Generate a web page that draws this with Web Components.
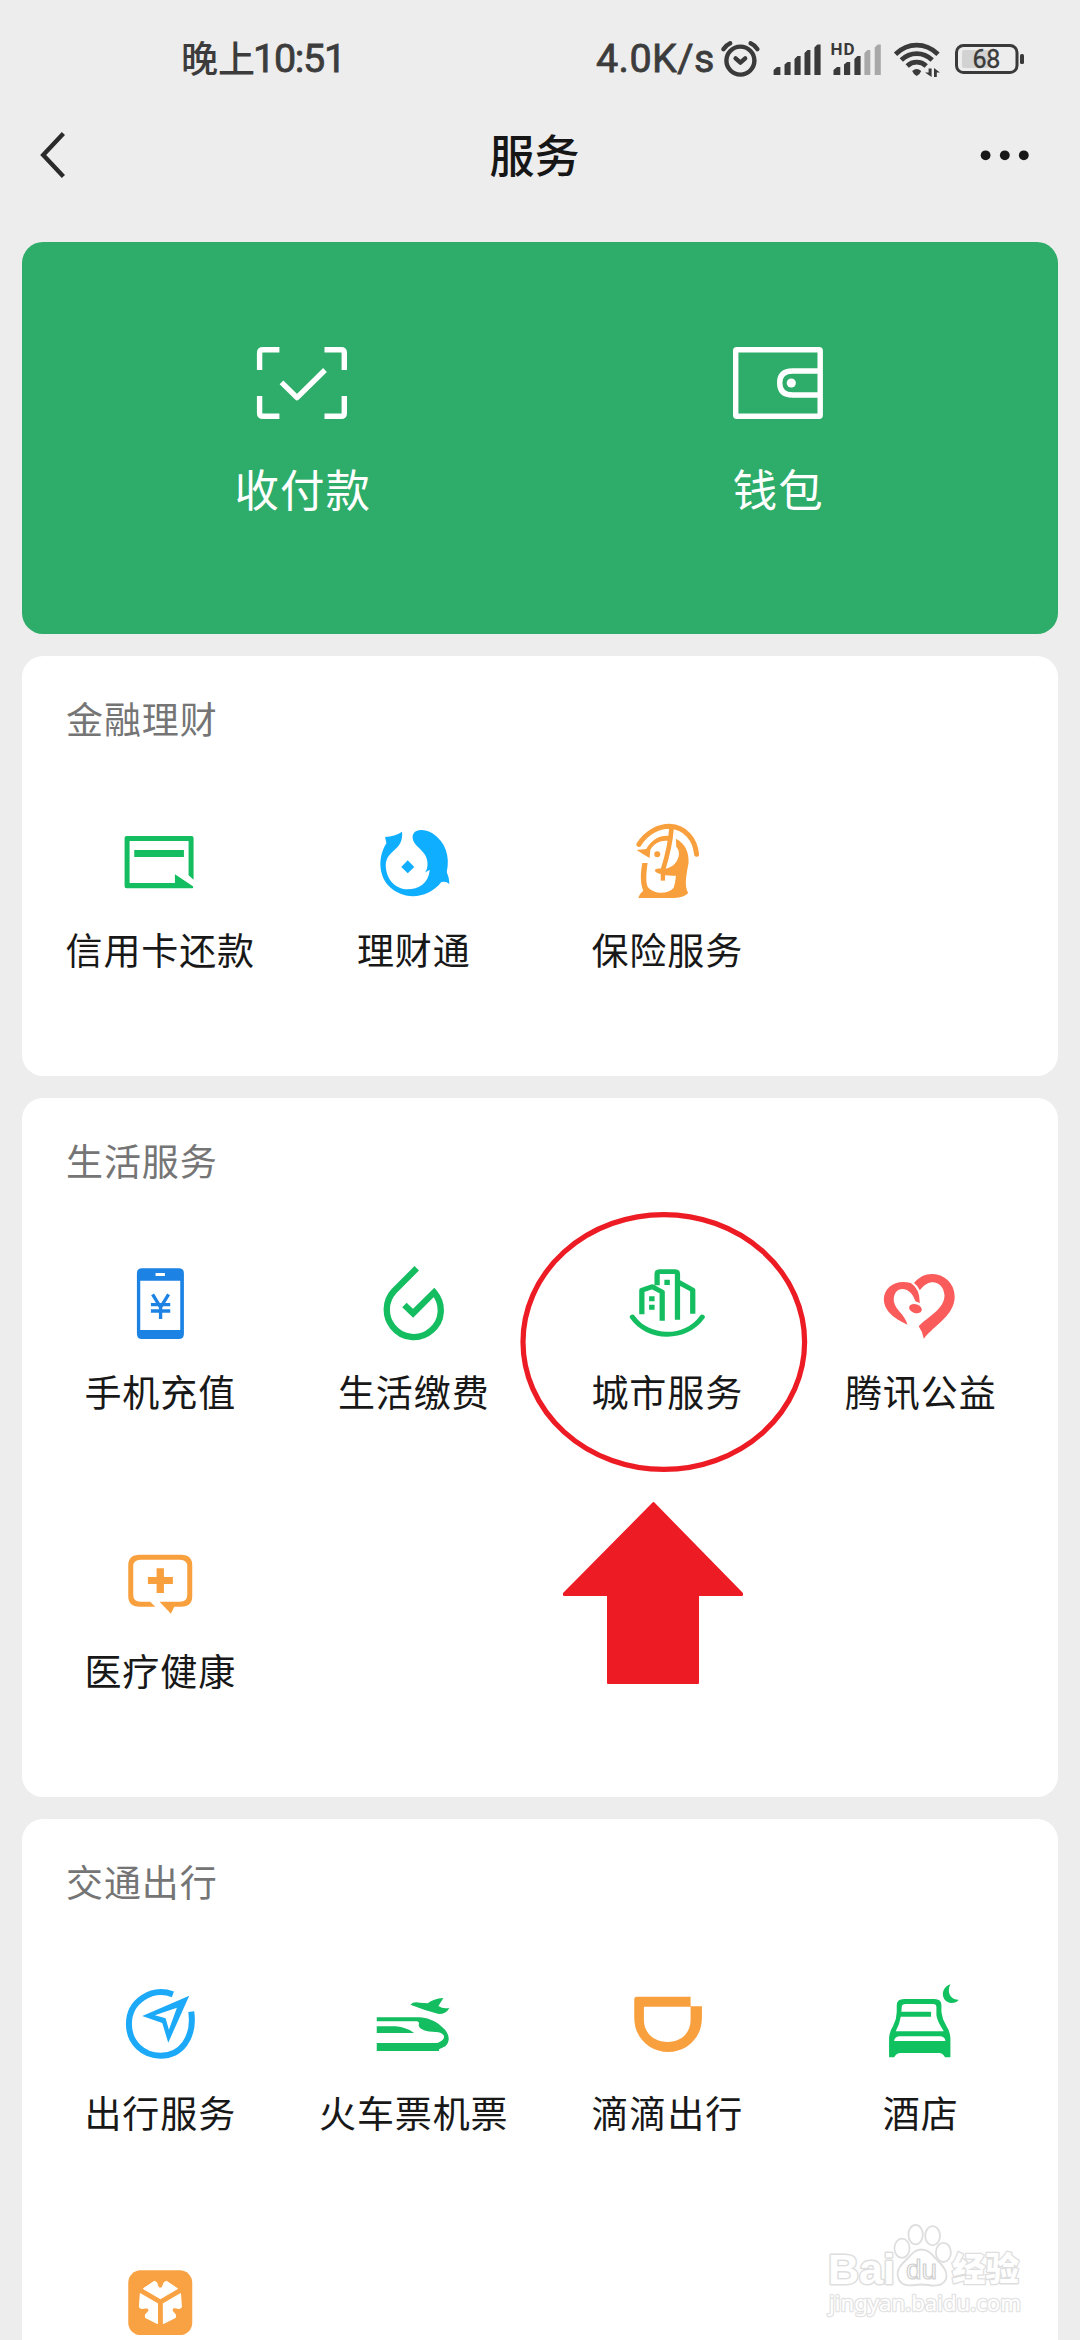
<!DOCTYPE html>
<html lang="zh-CN">
<head>
<meta charset="utf-8">
<title>服务</title>
<style>
html,body{margin:0;padding:0;background:#ededed}
body{width:1080px;height:2340px;overflow:hidden;font-family:"Noto Sans CJK SC",sans-serif}
</style>
</head>
<body>
<service-page></service-page>
<script>
const define = (name, html) => {
  const t = document.createElement('template');
  t.innerHTML = html;
  customElements.define(name, class extends HTMLElement {
    constructor() {
      super();
      this.attachShadow({mode: 'open'}).appendChild(t.content.cloneNode(true));
    }
  });
};

define('status-bar', `
<style>
:host{display:flex;align-items:center;justify-content:space-between;box-sizing:border-box;height:118px;padding:0 56px 0 181px;color:#3c3c3c;font:500 37px/1 "Noto Sans CJK SC",sans-serif}
.time,.right{display:flex;align-items:center}
.cjk{line-height:40px;padding-bottom:4px}
.latin{font:400 39.5px/44px Roboto,sans-serif;-webkit-text-stroke:.8px #3c3c3c}
.time .latin{letter-spacing:-1.3px;margin-left:-2px}
.right .latin{letter-spacing:.4px;width:124px}
svg{display:block}
</style>
<div class="time"><span class="cjk">晚上</span><span class="latin">10:51</span></div>
<div class="right"><span class="latin">4.0K/s</span>
<svg width="304" height="46" viewBox="720 36 304 46" fill="#3a3a3a">
 <g fill="none" stroke="#3a3a3a" stroke-width="4.4" stroke-linecap="round" stroke-linejoin="round">
  <circle cx="740.4" cy="60.6" r="14"/><path d="M723.4 49.2Q726 45.2 730.2 43.3M757.4 49.2Q755 45.2 750.6 43.3"/><path d="M735.6 58.4L740.4 62.6L745.2 58.4"/>
 </g>
 <path d="M773.6 75V70L777 67H780.4V75zM784.5 75V64.5L787.5 62H790.6V75zM794.5 75V59L797.5 56H800.6V75zM804.5 75V53L807.5 50H810.4V75zM814.4 75V47.5L817.4 44.5H820.6V75z"/>
 <text x="830.6" y="55" font-family="Roboto" font-weight="700" font-size="17" textLength="24">HD</text>
 <path d="M833.5 75V70L837 67H840.3V75zM844 75V64.5L847 62H850.2V75zM854.4 75V59L857.4 56H860.6V75z"/>
 <path fill="#a8a8a8" d="M864.4 75V53L867.4 50H870.3V75zM874.7 75V47.5L877.7 44.5H880.8V75z"/>
 <g fill="none" stroke="#3a3a3a" stroke-width="4.8"><path d="M895.5 54.2Q905 45.2 916.7 45.2T938 54.2"/><path d="M901.3 60Q908 53.6 916.7 53.6T932.2 60"/><path d="M907.2 66Q911.3 62.2 916.7 62.2T926.2 66"/></g>
 <path d="M912.2 71Q916.7 67 921.2 71Q920 74.5 916.7 76Q913.4 74.5 912.2 71z"/>
 <path d="M928.6 68.5H931.6V77L925 72.5H928.6zM934 77V68L940 72.5H936.8V77z"/>
 <rect x="962" y="50" width="27" height="18" rx="2" fill="#d2d2d2"/>
 <rect x="956.5" y="45.5" width="60.5" height="27" rx="7" fill="none" stroke="#3a3a3a" stroke-width="3"/>
 <rect x="1020" y="54" width="4" height="10" rx="1.5"/>
 <text x="972.4" y="68" font-family="Roboto" font-weight="400" font-size="25" textLength="28" stroke="#3a3a3a" stroke-width=".4">68</text>
</svg></div>`);

define('nav-bar', `
<style>
:host{display:flex;align-items:center;justify-content:space-between;box-sizing:border-box;height:76px;padding:0 50px 0 36px;color:#161616}
.title{font:500 45px/66px "Noto Sans CJK SC",sans-serif;padding:0 0 5px 3px}
svg{display:block}
.side{width:60px}
</style>
<svg class="side" width="60" height="60" viewBox="36 126 60 60"><path d="M63.4 133.500L43.2 155L63.4 176.500" fill="none" stroke="#2a2a2a" stroke-width="4.4"/></svg>
<span class="title"><slot></slot></span>
<svg class="side" width="60" height="60" viewBox="970 126 60 60" fill="#181818"><circle cx="985.6" cy="155.3" r="4.9"/><circle cx="1004.8" cy="155.3" r="4.9"/><circle cx="1023.8" cy="155.3" r="4.9"/></svg>`);

define('pay-card', `
<style>
:host{display:flex;box-sizing:border-box;height:392px;padding:0 42.5px;border-radius:21px;background:#2eac69}
</style><slot></slot>`);

define('pay-item', `
<style>
:host{display:flex;flex:1;flex-direction:column;align-items:center;padding-top:96px;color:#fff;font:400 44.5px/66px "Noto Sans CJK SC",sans-serif;letter-spacing:1px}
.label{margin-top:25px;padding-left:1px}
::slotted(svg){display:block}
</style><slot name="icon"></slot><span class="label"><slot></slot></span>`);

define('service-section', `
<style>
:host{display:block;box-sizing:border-box;padding:34px 11px 49px;border-radius:21px;background:#fff;letter-spacing:.9px;font-size:37px}
.title{padding:0 0 2px 33px;line-height:56px;color:#757575;font-weight:400}
.grid{display:grid;grid-template-columns:repeat(4,1fr);grid-auto-rows:279px}
</style><div class="title"><slot name="title"></slot></div><div class="grid"><slot></slot></div>`);

define('service-item', `
<style>
:host{display:flex;flex-direction:column;align-items:center;padding-top:72px;color:#181818;line-height:50px;white-space:nowrap}
.label{margin-top:20px;padding-left:1px}
::slotted(svg){display:block;width:84px;height:84px;overflow:visible}
</style><slot name="icon"></slot><span class="label"><slot></slot></span>`);

define('callout-mark', `
<style>
:host{position:absolute;left:518px;top:1208px;width:292px;height:480px}
svg{display:block}
</style>
<svg width="292" height="480" viewBox="518 1208 292 480"><ellipse cx="663.8" cy="1342" rx="140.8" ry="127.4" fill="none" stroke="#ed1c24" stroke-width="5.2"/><path fill="#ed1c24" stroke="#ed1c24" stroke-width="2" stroke-linejoin="round" d="M653.500 1503L742 1593.500V1595H698V1683H608V1595H564V1593.500z"/></svg>`);

define('site-watermark', `
<style>
:host{position:absolute;left:820px;top:2215px;width:210px;height:110px}
svg{display:block}
</style>
<svg width="210" height="110" viewBox="820 2215 210 110" fill="#fff" stroke="#dedede" stroke-width="1.8" stroke-linejoin="round">
 <text x="828" y="2283.500" font-family="Liberation Sans" font-weight="700" font-size="43" textLength="67" lengthAdjust="spacingAndGlyphs" paint-order="stroke" stroke-width="3">Bai</text>
 <ellipse cx="902" cy="2248.3" rx="7.6" ry="9.6"/><ellipse cx="915.6" cy="2234.6" rx="7.2" ry="9.8"/><ellipse cx="932.6" cy="2235.7" rx="7.4" ry="9.6"/><ellipse cx="943.4" cy="2252.4" rx="7.5" ry="9.6"/>
 <path d="M921.5 2249.5C929 2249.5 933 2256 938 2261C944 2267 948 2272 946 2279C943 2287 934 2286 928 2285Q922 2284 915 2285C909 2286 900 2286 898 2277C896 2269 902 2264 907 2259C912 2254 915 2249.5 921.5 2249.5z"/>
 <text x="906" y="2279" font-family="Liberation Sans" font-size="27" textLength="31" lengthAdjust="spacingAndGlyphs" stroke-width="1.2" stroke="#d0d0d0">du</text>
 <text x="952" y="2281" font-family="Noto Sans CJK SC" font-weight="900" font-size="33.5" textLength="67" paint-order="stroke" stroke-width="2.6">经验</text>
 <text x="829" y="2310.5" font-family="Noto Sans,Open Sans" font-size="22.5" textLength="192" lengthAdjust="spacingAndGlyphs" paint-order="stroke" stroke="#e3e3e3" stroke-width="2.6">jingyan.baidu.com</text>
</svg>`);

define('service-page', `
<style>
:host{display:block;position:relative;width:1080px;height:2340px;overflow:hidden;background:#ededed}
main{display:flex;flex-direction:column;gap:22px;padding:48px 22px 0}
</style>
<status-bar></status-bar>
<nav-bar>服务</nav-bar>
<main>
<pay-card>
 <pay-item><svg slot="icon" width="100" height="92" viewBox="252 338 100 92" fill="none" stroke="#fff" stroke-width="5.4"><path d="M279.4 349.8H263Q259.6 349.8 259.6 353V370M324.5 349.8H341Q344.3 349.8 344.3 353V370M259.6 396V413Q259.6 416.3 263 416.3H279.4M344.3 396V413Q344.3 416.3 341 416.3H324.5"/><path stroke-linejoin="round" d="M281.5 382.4L297 397.6L325 370"/></svg>收付款</pay-item>
 <pay-item><svg slot="icon" width="100" height="92" viewBox="727 338 100 92" fill="none" stroke="#fff" stroke-width="5.4" stroke-linejoin="round"><rect x="734.7" y="349.8" width="84.5" height="66.5" rx="1"/><path d="M819 371H791.5Q778.7 371 778.7 383T791.5 395H819"/><circle cx="790.3" cy="383" r="4.6" fill="#fff" stroke="none"/></svg>钱包</pay-item>
</pay-card>

<service-section><span slot="title">金融理财</span>
 <service-item><svg slot="icon" viewBox="117.75 820 84 84"><g transform="translate(40 670) scale(.33333)" fill="#14bd60"><path d="M253 504Q253 498 259 498H454Q460 498 460 504V629L445 616V513H268V639H404V613L458 649Q461 655 454 655H259Q253 655 253 649z"/><path d="M282 540H431V561H282z"/></g></svg>信用卡还款</service-item>
 <service-item><svg slot="icon" viewBox="371.25 820 84 84"><g transform="translate(40 670) scale(.33333)" fill="#10aeff"><path d="M1087 485Q1065 500 1036 501L1040 520C1014 560 1017 615 1045 646C1085 690 1160 692 1205 636Q1219 633 1229 642Q1229 624 1221 606C1232 560 1217 515 1178 490C1160 479 1142 478 1132 482C1117 487 1114 505 1126 521C1140 539 1160 548 1163 575Q1165 595 1156 607L1170 600C1166 640 1137 658 1103 658C1062 657 1038 622 1038 585C1040 538 1092 543 1087 485z"/><path d="M1104 571L1123.500 591L1104 610L1084.500 591z"/></g></svg>理财通</service-item>
 <service-item><svg slot="icon" viewBox="624.75 820 84 84"><g transform="translate(560 790) scale(.33333)" fill="#f9a03e"><g fill="none" stroke="#f9a03e" stroke-width="15" stroke-linecap="round"><path d="M236 163C260 125 296 109 328 109C376 111 405 149 409 193"/><path stroke-width="14" stroke-linecap="butt" d="M334 112Q330 170 308 240"/><path stroke-width="13" stroke-linecap="butt" d="M308 240V272"/></g><path d="M229 180L258 177C275 148 300 135 327 138L325 153C304 150 283 157 270 180L268 204Q250 194 229 180z"/><circle cx="291" cy="193" r="9"/><path d="M347 146C376 161 386 187 385 218C380 248 370 285 384 309Q372 322 342 324H234Q238 310 249 302C239 278 241 247 246 219H262C258 249 256 274 262 290C282 315 324 312 340 294Q346 277 347 257Q318 259 298 251Q284 248 284 240Q287 235 304 235C323 238 337 229 346 218C358 202 360 183 348 170z"/></g></svg>保险服务</service-item>
</service-section>

<service-section><span slot="title">生活服务</span>
 <service-item><svg slot="icon" viewBox="117.75 1262 84 84"><g transform="translate(60 1240) scale(.33333)"><path fill="#1c83e4" fill-rule="evenodd" d="M245 85H356Q371 85 371 100V281Q371 297 356 297H245Q230 297 230 281V100Q230 85 245 85zM240 122V270H360V122zM286 99V108H314V99z"/><path d="M277 163L301 202L325 163M272 194H330M272 213H330M301 200V237" fill="none" stroke="#1c83e4" stroke-width="10"/></g></svg>手机充值</service-item>
 <service-item><svg slot="icon" viewBox="371.25 1262 84 84"><g transform="translate(60 1240) scale(.33333)"><path fill="none" stroke="#14bd60" stroke-width="19" d="M1071 85L1003 153C975 183 974 229 999 260C1027 296 1080 302 1114 272C1150 243 1152 192 1123 157L1060 220L1034 195"/></g></svg>生活缴费</service-item>
 <service-item><svg slot="icon" viewBox="624.75 1262 84 84"><g transform="translate(510 1200) scale(.36352 .33333)" fill="none" stroke="#14bd60" stroke-width="14.500" stroke-linejoin="round"><path d="M362 343V271L390 260L418 276V362M404 256V221Q404 215 412 215H452Q460 215 460 221V359M460 245L502 270V341"/><path stroke-linecap="round" d="M336 351C378 418 482 422 528 351"/><path fill="#14bd60" stroke="none" d="M424 239H439V255H424zM382 289H397V304H382zM382 314H397V329H382z"/></g></svg>城市服务</service-item>
 <service-item><svg slot="icon" viewBox="878.25 1262 84 84"><g transform="translate(510 1200) scale(.36352 .33333)" fill="#fa5c5c"><path d="M1112 249C1125 231 1145 221 1164 222C1200 224 1225 255 1224 292C1222 347 1170 374 1139 416Q1136 396 1125 379C1149 351 1196 328 1196 286C1193 243 1154 231 1128 271Q1123 257 1112 249z"/><path d="M1103 249Q1128 265 1128 309L1116 304C1106 270 1084 261 1069 270C1058 278 1055 291 1057 306C1061 330 1087 343 1094 374C1067 360 1029 338 1029 297C1030 260 1064 237 1103 249z"/><ellipse cx="1116" cy="326" rx="18" ry="13" transform="rotate(20 1116 326)"/></g></svg>腾讯公益</service-item>
 <service-item><svg slot="icon" viewBox="117.75 1541 84 84"><g transform="translate(60 1520) scale(.33333)" fill="#f9a03e"><path d="M238 104H363Q396 104 396 136V228Q396 260 363 260H342L332 281L298 245H359Q381 245 381 225V139Q381 119 359 119H241Q219 119 219 139V225Q219 245 241 245H270L285 260H238Q204 260 204 228V136Q204 104 238 104z"/><path d="M289 145H311V171H338V192H311V219H289V192H263V171H289z"/></g></svg>医疗健康</service-item>
</service-section>

<service-section><span slot="title">交通出行</span>
 <service-item><svg slot="icon" viewBox="117.75 1983 84 84"><g transform="translate(60 1970) scale(.33333)"><path fill="none" stroke="#1ca9f7" stroke-width="18" d="M338 73C274 50 206 94 206 162C206 218 249 257 301 257C361 257 404 205 393 125"/><path fill="#1ca9f7" fill-rule="evenodd" d="M387 77L324 218L306 159L246 138zM350 113L284 136L316 145L326 179z"/></g></svg>出行服务</service-item>
 <service-item><svg slot="icon" viewBox="371.25 1983 84 84"><g transform="translate(60 1970) scale(.33333)" fill="#14bd60"><path d="M951 142H1080C1113 145 1135 158 1151 175C1170 192 1172 215 1157 229L1138 238V243H951V219H1133C1152 213 1156 201 1151 195Q1144 185 1118 185C1089 184 1075 172 1077 164Q1080 156 1072 154H951z"/><path d="M951 169H1008Q1040 172 1063 189H951zM1052 104Q1060 94 1080 98L1104 100Q1120 86 1151 84L1136 108Q1152 119 1169 113Q1160 132 1137 132Q1095 121 1052 104z"/></g></svg>火车票机票</service-item>
 <service-item><svg slot="icon" viewBox="624.75 1983 84 84"><g transform="translate(580 1970) scale(.33333)" fill="#f9a03e"><path d="M170 80H331V109H365V143C365 205 318 246 264 246S162 205 162 143V88Q162 80 170 80zM191 110V151C191 190 223 216 262 216S331 190 331 151V110z" fill-rule="evenodd"/></g></svg>滴滴出行</service-item>
 <service-item><svg slot="icon" viewBox="878.25 1983 84 84"><g transform="translate(580 1970) scale(.33333)"><path fill="#10c160" fill-rule="evenodd" d="M928 262V203Q930 183 940 168Q951 147 951 126V106Q951 87 973 87H1064Q1085 87 1085 106V126Q1087 147 1100 168Q1111 184 1112 205V262H1096Q1089 249 1078 249H963Q950 249 943 262zM965 125H1054V140H963Q960 161 948 184H1092Q1071 151 1070 135V111Q1070 102 1060 102H978Q966 102 966 111zM943 213H1097Q1096 201 1082 199H958Q945 201 943 213z"/><path fill="#10c160" d="M1112 43C1080 53 1083 97 1115 99Q1130 99 1137 89C1114 92 1099 67 1112 43z"/></g></svg>酒店</service-item>
 <service-item><svg slot="icon" viewBox="117.75 2262 84 84"><g transform="translate(60 2230) scale(.33333)"><rect x="204" y="121" width="192" height="194" rx="37" fill="#f9a243"/><g fill="#fff" stroke="#fff" stroke-width="3" stroke-linejoin="round"><path d="M249 176L282 154L289 157L295 174H305L312 157L319 154L352 176L300.500 206z"/><path d="M249 176L282 154L289 157L295 174H305L312 157L319 154L352 176L300.500 206z" transform="rotate(120 300.500 216)"/><path d="M249 176L282 154L289 157L295 174H305L312 157L319 154L352 176L300.500 206z" transform="rotate(240 300.500 216)"/></g></g></svg></service-item>
</service-section>
</main>
<callout-mark></callout-mark>
<site-watermark></site-watermark>`);
</script>
</body>
</html>
